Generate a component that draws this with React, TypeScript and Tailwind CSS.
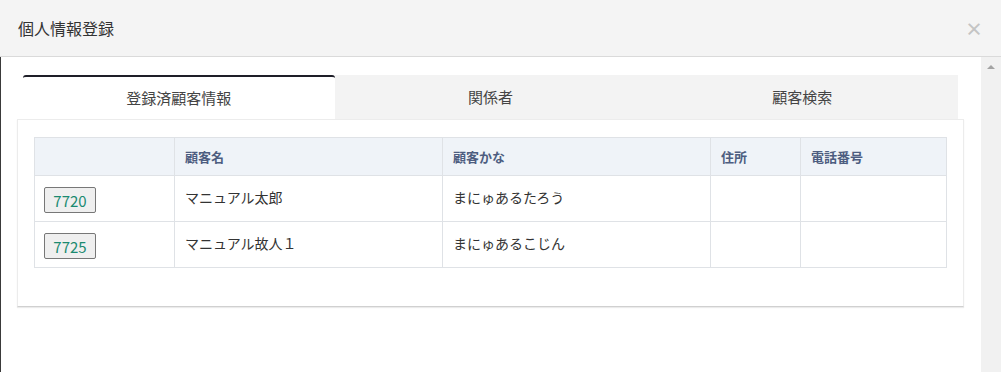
const rows = [
  { id: '7720', name: 'マニュアル太郎', kana: 'まにゅあるたろう', address: '', tel: '' },
  { id: '7725', name: 'マニュアル故人１', kana: 'まにゅあるこじん', address: '', tel: '' },
];

const tabs = ['登録済顧客情報', '関係者', '顧客検索'];

export default function App() {
  return (
    <div className="flex h-[372px] w-[1001px] flex-col overflow-hidden bg-white font-['Noto_Sans_CJK_JP','Noto_Sans',sans-serif] text-[#333]">
      {/* modal header */}
      <div className="flex h-[57px] shrink-0 items-center justify-between border-b border-[#dadada] bg-[#f4f4f4] pl-[18px] pr-[18px]">
        <h1 className="text-[16px] leading-none text-[#333]">個人情報登録</h1>
        <button className="text-[18px] font-bold leading-none text-[#c4c4c4]">×</button>
      </div>

      <div className="flex flex-1 border-l border-[#3a3a3a]">
        <div className="flex-1 pl-[16px] pr-[17px] pt-[18px]">
          {/* tabs */}
          <div className="mx-[6px] flex h-[44px]">
            {tabs.map((tab, i) => (
              <div
                key={tab}
                className={
                  i === 0
                    ? 'flex flex-1 items-center justify-center rounded-t-[3px] border-t-2 border-[#1e1e28] bg-white text-[15px] text-[#444]'
                    : 'flex flex-1 items-center justify-center bg-[#f3f3f3] text-[15px] text-[#444]'
                }
              >
                {tab}
              </div>
            ))}
          </div>

          {/* card */}
          <div className="border border-[#ececec] border-b-[#d0d0d0] px-[16px] pb-[38px] pt-[17px] shadow-[0_1px_1px_rgba(0,0,0,0.08)]">
            <table className="w-full border-collapse text-left">
              <thead>
                <tr className="h-[38px] bg-[#eff3f8]">
                  <th className="w-[140px] border border-[#dfe2e6]"></th>
                  <th className="w-[268px] border border-[#dfe2e6] pl-[10px] text-[13px] font-bold text-[#4d5d80]">顧客名</th>
                  <th className="w-[268px] border border-[#dfe2e6] pl-[10px] text-[13px] font-bold text-[#4d5d80]">顧客かな</th>
                  <th className="w-[90px] border border-[#dfe2e6] pl-[10px] text-[13px] font-bold text-[#4d5d80]">住所</th>
                  <th className="border border-[#dfe2e6] pl-[10px] text-[13px] font-bold text-[#4d5d80]">電話番号</th>
                </tr>
              </thead>
              <tbody>
                {rows.map((row) => (
                  <tr key={row.id} className="h-[46px]">
                    <td className="border border-[#dfe2e6] pl-[9px] pt-[3px]">
                      <button className="h-[26px] w-[52px] rounded-[2px] border border-[#777] bg-[#efefef] text-[15px] leading-none text-[#1b8a70]">
                        {row.id}
                      </button>
                    </td>
                    <td className="border border-[#dfe2e6] pb-[3px] pl-[10px] text-[14px]">{row.name}</td>
                    <td className="border border-[#dfe2e6] pb-[3px] pl-[10px] text-[14px]">{row.kana}</td>
                    <td className="border border-[#dfe2e6] pl-[10px] text-[14px]">{row.address}</td>
                    <td className="border border-[#dfe2e6] pl-[10px] text-[14px]">{row.tel}</td>
                  </tr>
                ))}
              </tbody>
            </table>
          </div>
        </div>

        {/* scrollbar */}
        <div className="flex w-[20px] shrink-0 justify-center bg-[#f1f1f1] pt-[8px]">
          <div className="h-0 w-0 border-x-[4px] border-b-[4px] border-x-transparent border-b-[#a3a3a3]"></div>
        </div>
      </div>
    </div>
  );
}
